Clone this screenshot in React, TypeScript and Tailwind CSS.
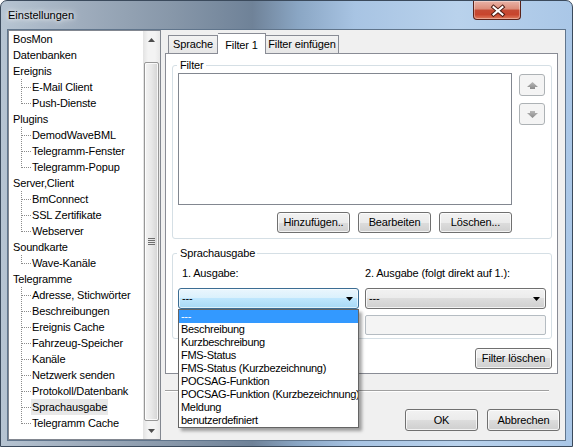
import React from 'react'

type TreeNode = { label: string; children?: string[] }

const tree: TreeNode[] = [
  { label: 'BosMon' },
  { label: 'Datenbanken' },
  { label: 'Ereignis', children: ['E-Mail Client', 'Push-Dienste'] },
  { label: 'Plugins', children: ['DemodWaveBML', 'Telegramm-Fenster', 'Telegramm-Popup'] },
  { label: 'Server,Client', children: ['BmConnect', 'SSL Zertifikate', 'Webserver'] },
  { label: 'Soundkarte', children: ['Wave-Kanäle'] },
  {
    label: 'Telegramme',
    children: [
      'Adresse, Stichwörter',
      'Beschreibungen',
      'Ereignis Cache',
      'Fahrzeug-Speicher',
      'Kanäle',
      'Netzwerk senden',
      'Protokoll/Datenbank',
      'Sprachausgabe',
      'Telegramm Cache',
    ],
  },
]

const options = [
  '---',
  'Beschreibung',
  'Kurzbeschreibung',
  'FMS-Status',
  'FMS-Status (Kurzbezeichnung)',
  'POCSAG-Funktion',
  'POCSAG-Funktion (Kurzbezeichnung)',
  'Meldung',
  'benutzerdefiniert',
]

// win7 button look, without alignment
const face =
  'flex items-center rounded-[3px] border border-[#707070] bg-[linear-gradient(#f2f2f2_0%,#ebebeb_50%,#dddddd_50%,#cfcfcf_100%)] shadow-[inset_0_0_0_1px_rgba(255,255,255,0.75)] text-black leading-none'

function ChildRow({ label, last, selected }: { label: string; last: boolean; selected: boolean }) {
  return (
    <div className="flex h-[16px] items-center">
      <svg width="23" height="16" className="shrink-0" shapeRendering="crispEdges">
        <line x1="12.5" y1="0" x2="12.5" y2={last ? 9 : 16} stroke="#8c8c8c" strokeDasharray="1 1" />
        <line x1="13" y1="8.5" x2="22" y2="8.5" stroke="#8c8c8c" strokeDasharray="1 1" />
      </svg>
      <span className={`h-[16px] leading-[16px] px-[1px] -ml-[1px] ${selected ? 'bg-[#e8e8e8]' : ''}`}>{label}</span>
    </div>
  )
}

function ScrollArrow({ down }: { down?: boolean }) {
  return (
    <div className="flex h-[17px] items-center justify-center">
      <svg width="7" height="4">
        <polygon points={down ? '0,0 7,0 3.5,4' : '3.5,0 7,4 0,4'} fill="#4d4d4d" />
      </svg>
    </div>
  )
}

function MoveButton({ down }: { down?: boolean }) {
  return (
    <div className="flex h-[22px] w-[26px] items-center justify-center rounded-[3px] border border-[#adb2b5] bg-[#f4f4f4]">
      <svg width="11" height="7">
        <defs>
          <linearGradient id={down ? 'gd' : 'gu'} x1="0" y1="0" x2="0" y2="1">
            <stop offset="0" stopColor="#b8b8b8" />
            <stop offset="1" stopColor="#8a8a8a" />
          </linearGradient>
        </defs>
        <polygon
          points={down ? '3,0 8,0 8,2 11,2 5.5,7 0,2 3,2' : '5.5,0 11,5 8,5 8,7 3,7 3,5 0,5'}
          fill={`url(#${down ? 'gd' : 'gu'})`}
        />
      </svg>
    </div>
  )
}

function ComboArrow() {
  return (
    <svg width="7" height="4">
      <polygon points="0,0 7,0 3.5,4" fill="#000" />
    </svg>
  )
}

export default function App() {
  return (
    <div className="relative h-[447px] w-[573px] overflow-hidden font-['Liberation_Sans',Arial,sans-serif] text-[11px] tracking-[-0.15px] text-black">
      <div className="flex h-full w-full flex-col rounded-t-[7px] border border-[#3b4a5c] bg-[linear-gradient(90deg,#b6c4d2_0%,#9fadbd_14%,#8797a9_30%,#6f8298_44%,#8aa6c4_52%,#a8c4e3_62%,#b9d2ec_80%,#aac7e7_100%)]">
        {/* title bar */}
        <div className="flex h-[29px] shrink-0">
          <div className="pl-[7px] pt-[8px] text-[11px] leading-[13px] tracking-normal [text-shadow:0_0_8px_#fff,0_0_4px_#fff]">Einstellungen</div>
          <div className="ml-auto mr-[51px] flex h-[19px] w-[48px] items-center justify-center rounded-b-[4px] border border-t-0 border-[#5a2219] bg-[linear-gradient(#e9b3a7_0%,#dc8c79_45%,#c54b34_50%,#c8452d_75%,#df7b5d_100%)] shadow-[inset_0_0_0_1px_rgba(255,255,255,0.35)]">
            <svg width="48" height="19">
              <path d="M19.5 6 L28.5 13.5 M28.5 6 L19.5 13.5" stroke="#4a1a12" strokeWidth="4" strokeLinecap="square" />
              <path d="M19.5 6 L28.5 13.5 M28.5 6 L19.5 13.5" stroke="#fff" strokeWidth="2" strokeLinecap="square" />
            </svg>
          </div>
        </div>

        {/* client area */}
        <div className="mx-[7px] flex h-[410px] shrink-0 bg-[#f0f0f0] shadow-[0_0_0_1px_#60758c]">
          {/* tree */}
          <div className="flex h-full w-[153px] shrink-0 border border-[#828790] bg-white">
            <div className="flex-1 overflow-hidden">
              {tree.map((n) => (
                <React.Fragment key={n.label}>
                  <div className="h-[16px] pl-[4px] leading-[16px]">{n.label}</div>
                  {n.children?.map((c, i) => (
                    <ChildRow
                      key={c}
                      label={c}
                      last={i === n.children!.length - 1}
                      selected={c === 'Sprachausgabe'}
                    />
                  ))}
                </React.Fragment>
              ))}
            </div>
            <div className="flex w-[17px] flex-col bg-[linear-gradient(90deg,#e3e3e3,#f3f3f3_30%,#f3f3f3_70%,#e8e8e8)]">
              <ScrollArrow />
              <div className="flex-1 pt-[14px] px-[1px]">
                <div className="flex h-[359px] items-center justify-center rounded-[2px] border border-[#979797] bg-[linear-gradient(90deg,#f4f4f4,#e8e8e8_50%,#d4d4d4)] shadow-[inset_0_0_0_1px_rgba(255,255,255,0.8)]">
                  <div className="flex flex-col gap-[1px]">
                    <div className="h-[1px] w-[7px] bg-[#6e6e6e]" />
                    <div className="h-[1px] w-[7px] bg-[#6e6e6e]" />
                    <div className="h-[1px] w-[7px] bg-[#6e6e6e]" />
                    <div className="h-[1px] w-[7px] bg-[#6e6e6e]" />
                  </div>
                </div>
              </div>
              <ScrollArrow down />
            </div>
          </div>

          {/* right side */}
          <div className="flex flex-1 flex-col">
            <div className="ml-[4px] mt-[3px] w-[393px]">
              {/* tab headers */}
              <div className="flex h-[20px] items-end pl-[3px]">
                <div className="flex h-[18px] w-[50px] items-center justify-center border border-b-0 border-[#898c95] bg-[linear-gradient(#f3f3f3,#e6e6e6)]">
                  Sprache
                </div>
                <div className="relative z-10 -mb-[1px] flex h-[21px] w-[48px] items-start justify-center border border-b-0 border-l-0 border-[#898c95] bg-white pt-[3px]">
                  Filter 1
                </div>
                <div className="flex h-[18px] w-[73px] items-center justify-center border border-b-0 border-l-0 border-[#898c95] bg-[linear-gradient(#f3f3f3,#e6e6e6)]">
                  Filter einfügen
                </div>
              </div>

              {/* tab page */}
              <div className="h-[321px] border border-[#898c95] bg-white">
                <fieldset className="ml-[6px] mt-[5px] w-[380px] rounded-[3px] border border-[#d5dfe5]">
                  <legend className="ml-[4px] px-[3px] pr-[2px] leading-[13px]">Filter</legend>
                  <div className="mt-[1px] flex">
                    <div className="ml-[5px] h-[132px] w-[334px] border border-[#828790] bg-white" />
                    <div className="ml-[7px] mt-[1px] flex flex-col gap-[7px]">
                      <MoveButton />
                      <MoveButton down />
                    </div>
                  </div>
                  <div className="ml-[5px] mt-[7px] flex w-[334px] justify-end gap-[8px] pb-[5px]">
                    <div className={`${face} h-[21px] w-[73px] justify-center`}>Hinzufügen..</div>
                    <div className={`${face} h-[21px] w-[73px] justify-center`}>Bearbeiten</div>
                    <div className={`${face} h-[21px] w-[73px] justify-center`}>Löschen...</div>
                  </div>
                </fieldset>

                <fieldset className="ml-[6px] mt-[8px] w-[380px] rounded-[3px] border border-[#d5dfe5]">
                  <legend className="ml-[4px] px-[3px] pr-[2px] leading-[13px]">Sprachausgabe</legend>
                  <div className="ml-[5px] mt-[7px] flex gap-[6px] leading-[13px]">
                    <div className="w-[181px] pl-[4px]">1. Ausgabe:</div>
                    <div className="w-[181px]">2. Ausgabe (folgt direkt auf 1.):</div>
                  </div>
                  <div className="ml-[5px] mt-[8px] flex gap-[6px]">
                    <div className="relative z-20 h-[21px] w-[181px]">
                      <div className="flex h-full items-center justify-between rounded-[3px] border border-[#3c6d93] bg-[linear-gradient(#eaf6fd_0%,#d9f0fc_50%,#bee6fd_50%,#a7d9f5_100%)] pl-[3px] pr-[5px] shadow-[inset_0_0_0_1px_rgba(255,255,255,0.6)]">
                        <span>---</span>
                        <ComboArrow />
                      </div>
                      <div className="absolute left-0 top-full w-[181px] border border-[#646464] bg-white tracking-[-0.3px] shadow-[3px_3px_3px_rgba(0,0,0,0.35)]">
                        {options.map((o, i) => (
                          <div
                            key={o}
                            className={`h-[13px] overflow-hidden whitespace-nowrap pl-[2px] leading-[13px] ${
                              i === 0 ? 'bg-[#3399ff] text-white' : ''
                            }`}
                          >
                            {o}
                          </div>
                        ))}
                      </div>
                    </div>
                    <div className={`${face} h-[21px] w-[181px] justify-between pl-[3px] pr-[5px]`}>
                      <span>---</span>
                      <ComboArrow />
                    </div>
                  </div>
                  <div className="mb-[3px] ml-[192px] mt-[6px] h-[20px] w-[181px] rounded-[2px] border border-[#b5bcc2] bg-[#f4f4f4]" />
                </fieldset>

                <div className="ml-[6px] mt-[9px] flex w-[380px] justify-end">
                  <div className={`${face} h-[21px] w-[77px] justify-center`}>Filter löschen</div>
                </div>
              </div>
            </div>

            <div className="ml-[4px] mt-[16px] h-[2px] w-[384px] border-t border-b border-t-[#a0a0a0] border-b-white" />

            <div className="mt-[17px] flex justify-end gap-[9px] pr-[5px]">
              <div className={`${face} h-[22px] w-[73px] justify-center border-[#3c7fb1] shadow-[inset_0_0_0_1px_#6ccef5]`}>OK</div>
              <div className={`${face} h-[22px] w-[73px] justify-center`}>Abbrechen</div>
            </div>
          </div>
        </div>
      </div>
    </div>
  )
}
